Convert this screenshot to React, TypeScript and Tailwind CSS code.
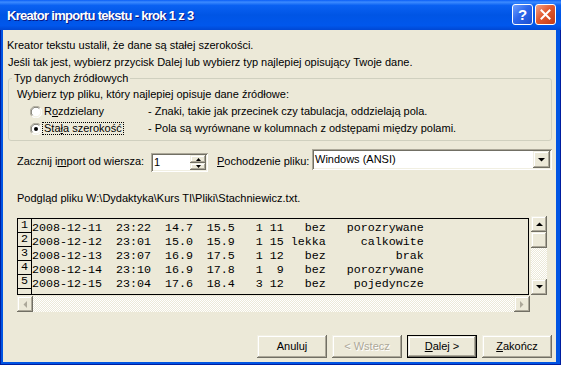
import React from 'react';

const raised =
  'shadow-[inset_-1px_-1px_#716F64,inset_1px_1px_#F1EFE2,inset_-2px_-2px_#ACA899,inset_2px_2px_#ffffff]';
const sunken =
  'shadow-[inset_1px_1px_#ACA899,inset_-1px_-1px_#ffffff,inset_2px_2px_#716F64,inset_-2px_-2px_#F1EFE2]';
const checker =
  'bg-[repeating-conic-gradient(#ffffff_0%_25%,#ECE9D8_0%_50%)] bg-[length:2px_2px]';

const rows = [
  ['2008-12-11', '23:22', '14.7', '15.5', '1', '11', 'bez', 'porozrywane'],
  ['2008-12-12', '23:01', '15.0', '15.9', '1', '15', 'lekka', 'calkowite'],
  ['2008-12-13', '23:07', '16.9', '17.5', '1', '12', 'bez', 'brak'],
  ['2008-12-14', '23:10', '16.9', '17.8', '1', '9', 'bez', 'porozrywane'],
  ['2008-12-15', '23:04', '17.6', '18.4', '3', '12', 'bez', 'pojedyncze'],
];

const formatRow = (r: string[]) =>
  `${r[0]}  ${r[1]}  ${r[2]}  ${r[3]}   ${r[4]} ${r[5].padStart(2)} ${r[6].padStart(5)}${r[7].padStart(14)}`;

const Arrow: React.FC<{ dir: 'up' | 'down' | 'left' | 'right'; disabled?: boolean }> = ({ dir, disabled }) => {
  const pts = {
    up: '0,4 3.5,0.5 7,4',
    down: '0,0 7,0 3.5,3.5',
    left: '4,0 4,7 0.5,3.5',
    right: '0,0 0,7 3.5,3.5',
  }[dir];
  const vertical = dir === 'up' || dir === 'down';
  return (
    <svg width={vertical ? 7 : 4} height={vertical ? 4 : 7} viewBox={vertical ? '0 0 7 4' : '0 0 4 7'}>
      <polygon points={pts} fill={disabled ? '#ACA899' : '#000'} />
    </svg>
  );
};

const Radio: React.FC<{ checked?: boolean }> = ({ checked }) => (
  <svg width="12" height="12" viewBox="0 0 12 12" className="shrink-0">
    <circle cx="6" cy="6" r="5.5" fill="#fff" />
    <path d="M1.8 10.2 A5.5 5.5 0 0 1 10.2 1.8" stroke="#ACA899" strokeWidth="1" fill="none" />
    <path d="M2.6 9.4 A4.4 4.4 0 0 1 9.4 2.6" stroke="#716F64" strokeWidth="1" fill="none" />
    <path d="M10.2 1.8 A5.5 5.5 0 0 1 1.8 10.2" stroke="#ffffff" strokeWidth="1" fill="none" />
    <path d="M9.4 2.6 A4.4 4.4 0 0 1 2.6 9.4" stroke="#F1EFE2" strokeWidth="1" fill="none" />
    {checked && <circle cx="6" cy="6" r="2" fill="#000" />}
  </svg>
);

const Button: React.FC<{ children: React.ReactNode; disabled?: boolean; isDefault?: boolean }> = ({
  children,
  disabled,
  isDefault,
}) => (
  <div className={`w-[70px] h-[23px] ${isDefault ? 'border border-black' : ''}`}>
    <div
      className={`w-full h-full bg-[#ECE9D8] ${raised} flex items-center justify-center leading-[13px] ${
        disabled ? 'text-[#ACA899] [text-shadow:1px_1px_#ffffff]' : 'text-black'
      }`}
    >
      {children}
    </div>
  </div>
);

export default function App() {
  return (
    <div className="w-[561px] h-[365px] bg-[#0054E3] flex flex-col overflow-hidden font-['Liberation_Sans',Arial,sans-serif] text-[11px] text-black shadow-[inset_1px_0_#001EA0,inset_-1px_0_#001EA0,inset_0_-1px_#001EA0]">
      {/* title bar */}
      <div className="h-[30px] shrink-0 flex items-center bg-[linear-gradient(to_bottom,#0A5EF6_0%,#3D8BFF_7%,#0A61F2_18%,#0055E5_50%,#0057EC_85%,#0047D3_100%)]">
        <div className="ml-[7px] flex-1 pt-[1px] text-white font-bold text-[13px] tracking-[-0.7px] leading-[16px] [text-shadow:1px_1px_#0A1883]">
          Kreator importu tekstu - krok 1 z 3
        </div>
        <div className="flex gap-[2px] mr-[5px] mt-[-1px]">
          <div className="w-[21px] h-[21px] rounded-[3px] border border-white bg-[linear-gradient(135deg,#6FA0FF_0%,#2E68EC_45%,#1B4FD0_100%)] flex items-center justify-center text-white font-bold text-[15px] leading-none">
            ?
          </div>
          <div className="w-[21px] h-[21px] rounded-[3px] border border-white bg-[linear-gradient(135deg,#F3A287_0%,#E2592F_45%,#C23B16_100%)] flex items-center justify-center">
            <svg width="11" height="11" viewBox="0 0 11 11">
              <path d="M1.5 1.5 L9.5 9.5 M9.5 1.5 L1.5 9.5" stroke="#fff" strokeWidth="2" strokeLinecap="square" />
            </svg>
          </div>
        </div>
      </div>

      {/* client area */}
      <div className="flex-1 ml-[3px] mr-[5px] mb-[3px] bg-[#ECE9D8] flex flex-col">
        <div className="mt-[9px] ml-[4px] h-[13px] leading-[13px]">
          Kreator tekstu ustalił, że dane są stałej szerokości.
        </div>
        <div className="mt-[4px] ml-[5px] h-[13px] leading-[13px]">
          Jeśli tak jest, wybierz przycisk Dalej lub wybierz typ najlepiej opisujący Twoje dane.
        </div>

        {/* group box */}
        <div className="relative mt-[9px] ml-[5px] mr-[4px] border border-[#D0D0BF] rounded-[3px] pt-[9px] pb-[3px] pl-[8px]">
          <span className="absolute -top-[7px] left-[3px] px-[2px] bg-[#ECE9D8] leading-[13px]">
            Typ danych źródłowych
          </span>
          <div className="h-[13px] leading-[13px]">Wybierz typ pliku, który najlepiej opisuje dane źródłowe:</div>
          <div className="mt-[2px] h-[17px] flex items-center">
            <div className="w-[131px] pl-[13px] flex items-center">
              <Radio />
              <span className="px-[1px] border border-transparent leading-[11px]">
                R<span className="underline">o</span>zdzielany
              </span>
            </div>
            <span className="leading-[13px]">- Znaki, takie jak przecinek czy tabulacja, oddzielają pola.</span>
          </div>
          <div className="h-[17px] flex items-center">
            <div className="w-[131px] pl-[13px] flex items-center">
              <Radio checked />
              <span className="px-[1px] border border-dotted border-black leading-[11px]">
                Sta<span className="underline">ł</span>a szerokość
              </span>
            </div>
            <span className="leading-[13px]">- Pola są wyrównane w kolumnach z odstępami między polami.</span>
          </div>
        </div>

        {/* start row / origin */}
        <div className="mt-[8px] ml-[14px] flex items-start">
          <div className="w-[134px] mt-[6px] leading-[13px]">
            Zacznij i<span className="underline">m</span>port od wiersza:
          </div>
          <div className={`w-[57px] h-[19px] mt-[4px] bg-white ${sunken} flex p-[2px]`}>
            <div className="flex-1 pl-[1px] leading-[15px]">1</div>
            <div className="w-[16px] flex flex-col">
              <div className={`h-[8px] bg-[#ECE9D8] ${raised} flex items-center justify-center`}>
                <svg width="5" height="3" viewBox="0 0 5 3">
                  <polygon points="0,3 2.5,0 5,3" fill="#000" />
                </svg>
              </div>
              <div className={`h-[7px] bg-[#ECE9D8] ${raised} flex items-center justify-center`}>
                <svg width="5" height="3" viewBox="0 0 5 3">
                  <polygon points="0,0 5,0 2.5,3" fill="#000" />
                </svg>
              </div>
            </div>
          </div>
          <div className="ml-[9px] w-[95px] mt-[6px] leading-[13px]">
            <span className="underline">P</span>ochodzenie pliku:
          </div>
          <div className={`w-[240px] h-[21px] bg-white ${sunken} flex p-[2px]`}>
            <div className="flex-1 pl-[1px] leading-[17px]">Windows (ANSI)</div>
            <div className={`w-[17px] bg-[#ECE9D8] ${raised} flex items-center justify-center`}>
              <Arrow dir="down" />
            </div>
          </div>
        </div>

        <div className="mt-[20px] ml-[14px] h-[13px] leading-[13px]">
          Podgląd pliku W:\Dydaktyka\Kurs TI\Pliki\Stachniewicz.txt.
        </div>

        {/* preview */}
        <div className="mt-[13px] ml-[14px] flex items-start">
          <div className="w-[512px] h-[77px] border border-black overflow-hidden flex font-['Liberation_Mono','Courier_New',monospace] text-[11.67px]">
            <div className="w-[14px] shrink-0 border-r border-black flex flex-col">
              <div className="h-[2px]" />
              {rows.map((_, i) => (
                <div key={i} className="h-[14px] shrink-0 border-b border-black text-center leading-[13px]">
                  {i + 1}
                </div>
              ))}
              <div className="h-[14px] shrink-0" />
            </div>
            <div className="flex flex-col pt-[2px]">
              {rows.map((r, i) => (
                <div key={i} className="h-[14px] leading-[14px] whitespace-pre">
                  {formatRow(r)}
                </div>
              ))}
            </div>
          </div>
          <div className={`ml-[2px] -mt-[2px] w-[16px] h-[79px] flex flex-col ${checker}`}>
            <div className={`h-[16px] bg-[#ECE9D8] ${raised} flex items-center justify-center`}>
              <Arrow dir="up" />
            </div>
            <div className={`h-[16px] bg-[#ECE9D8] ${raised}`} />
            <div className="flex-1" />
            <div className={`h-[16px] bg-[#ECE9D8] ${raised} flex items-center justify-center`}>
              <Arrow dir="down" />
            </div>
          </div>
        </div>
        <div className={`mt-[1px] ml-[14px] w-[513px] h-[16px] flex ${checker}`}>
          <div className={`w-[16px] bg-[#ECE9D8] ${raised} flex items-center justify-center`}>
            <Arrow dir="left" disabled />
          </div>
          <div className="flex-1" />
          <div className={`w-[16px] bg-[#ECE9D8] ${raised} flex items-center justify-center`}>
            <Arrow dir="right" disabled />
          </div>
        </div>

        {/* buttons */}
        <div className="mt-[23px] mr-[4px] flex justify-end gap-[5px]">
          <Button>Anuluj</Button>
          <Button disabled>&lt; Wstecz</Button>
          <Button isDefault>
            <span>
              <span className="underline">D</span>alej &gt;
            </span>
          </Button>
          <Button>
            <span>
              <span className="underline">Z</span>akończ
            </span>
          </Button>
        </div>
      </div>
    </div>
  );
}
